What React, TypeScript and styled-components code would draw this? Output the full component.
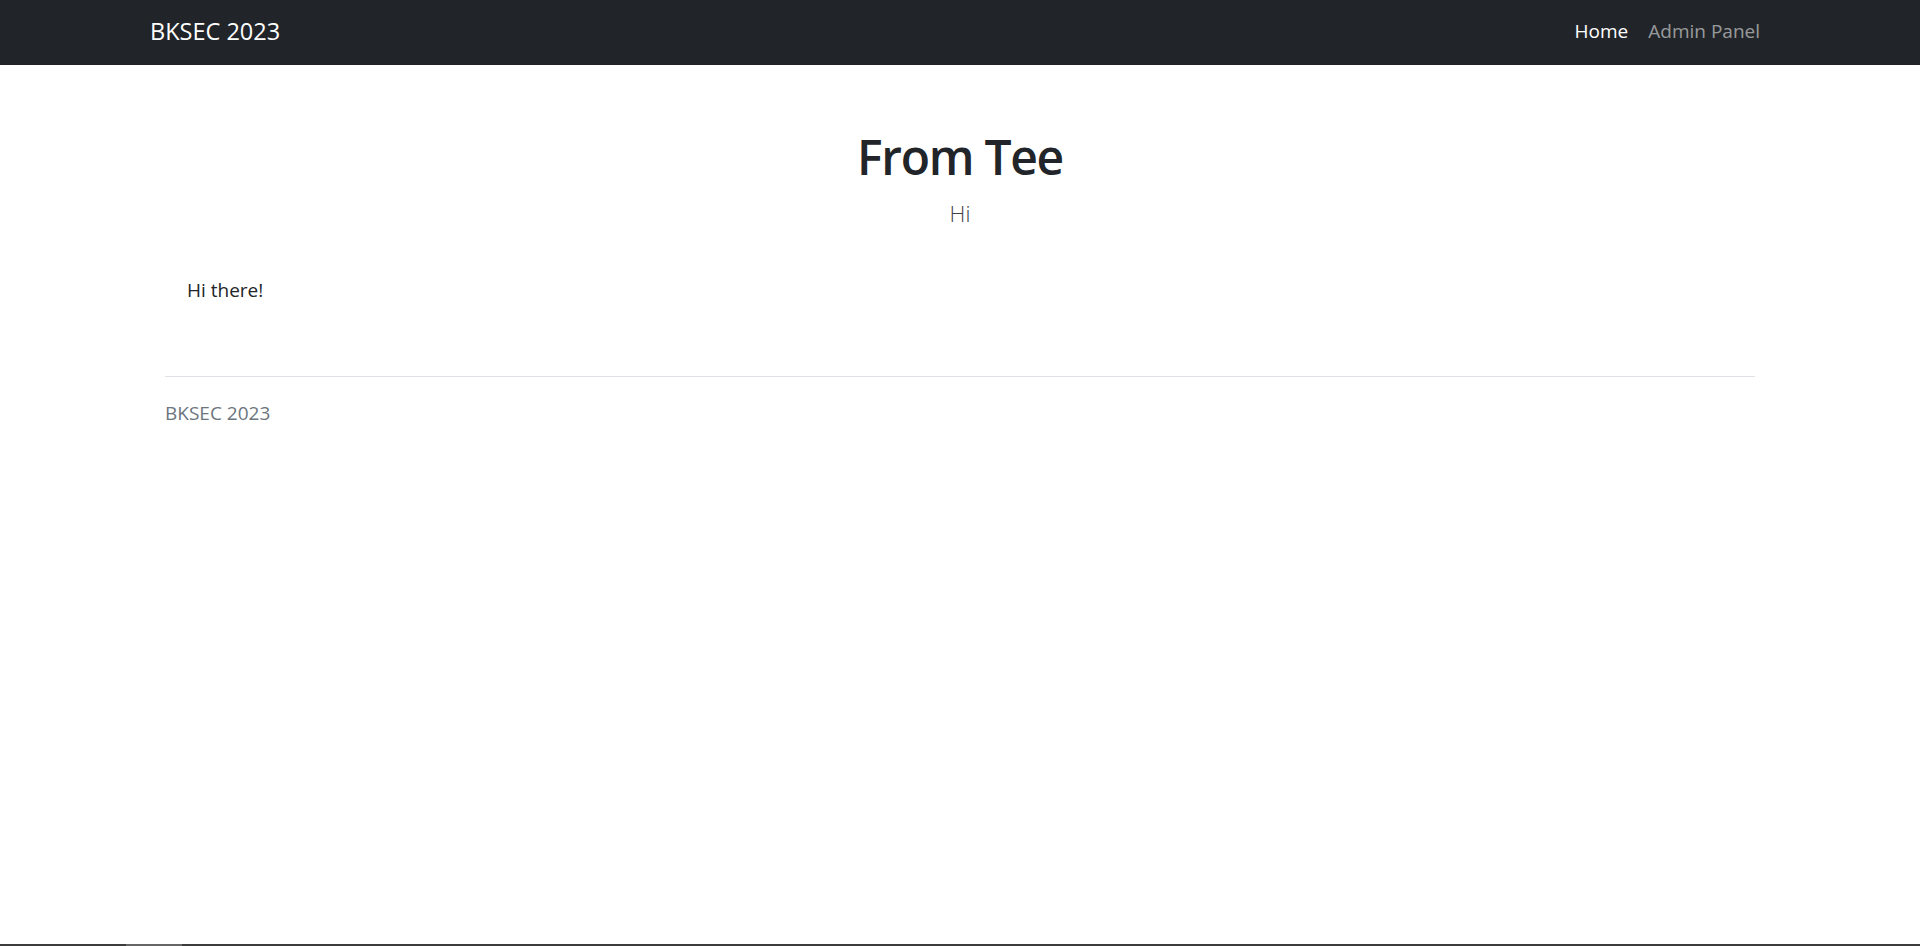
import React from "react";
import styled, { createGlobalStyle } from "styled-components";

const GlobalStyle = createGlobalStyle`
  html, body {
    margin: 0;
    padding: 0;
    background: #ffffff;
  }
  body {
    font-family: "Open Sans", "Noto Sans", "Liberation Sans", sans-serif;
    color: #212529;
  }
  * { box-sizing: border-box; }
`;

const Navbar = styled.nav`
  height: 65px;
  background: #212529;
`;

const NavInner = styled.div`
  width: 1620px;
  height: 100%;
  margin: 0 auto;
  padding-bottom: 3px;
  display: flex;
  align-items: center;
  justify-content: space-between;
`;

const Brand = styled.a`
  font-size: 23.5px;
  color: #ffffff;
  text-decoration: none;
`;

const NavList = styled.ul`
  list-style: none;
  margin: 0;
  padding: 0 0 1px;
  display: flex;
`;

const NavLink = styled.a<{ $active?: boolean }>`
  display: block;
  padding: 0 10px;
  font-size: 19px;
  text-decoration: none;
  color: ${(p) => (p.$active ? "#ffffff" : "rgba(255,255,255,0.55)")};
`;

const Main = styled.main`
  width: 1590px;
  margin: 0 auto;
`;

const Header = styled.header`
  padding-top: 62px;
  text-align: center;
`;

const Title = styled.h1`
  margin: 0;
  font-size: 48px;
  line-height: 1.25;
  font-weight: 600;
  letter-spacing: -1.3px;
  color: #212529;
`;

const Subtitle = styled.p`
  margin: 10px 0 0;
  font-size: 22px;
  line-height: 1.5;
  font-weight: 300;
  color: #3d4247;
`;

const Body = styled.div`
  margin-top: 46px;
  padding-left: 22px;
  font-size: 19px;
  line-height: 1.5;
`;

const Paragraph = styled.p`
  margin: 0;
`;

const Divider = styled.hr`
  margin: 71px 0 0;
  border: 0;
  border-top: 1px solid #dee2e6;
`;

const Footer = styled.footer`
  margin-top: 22px;
  font-size: 19px;
  line-height: 1.5;
  color: #6c757d;
`;

const ScrollTrack = styled.div`
  position: fixed;
  left: 0;
  right: 0;
  bottom: 0;
  height: 2px;
  background: #3c3c3c;
`;

const ScrollThumb = styled.div`
  position: absolute;
  left: 126px;
  top: 0;
  width: 56px;
  height: 2px;
  background: #666666;
`;

export default function App() {
  return (
    <>
      <GlobalStyle />
      <Navbar>
        <NavInner>
          <Brand href="#">BKSEC 2023</Brand>
          <NavList>
            <li>
              <NavLink href="#" $active>
                Home
              </NavLink>
            </li>
            <li>
              <NavLink href="#">Admin Panel</NavLink>
            </li>
          </NavList>
        </NavInner>
      </Navbar>
      <Main>
        <Header>
          <Title>From Tee</Title>
          <Subtitle>Hi</Subtitle>
        </Header>
        <Body>
          <Paragraph>Hi there!</Paragraph>
        </Body>
        <Divider />
        <Footer>BKSEC 2023</Footer>
      </Main>
      <ScrollTrack>
        <ScrollThumb />
      </ScrollTrack>
    </>
  );
}
